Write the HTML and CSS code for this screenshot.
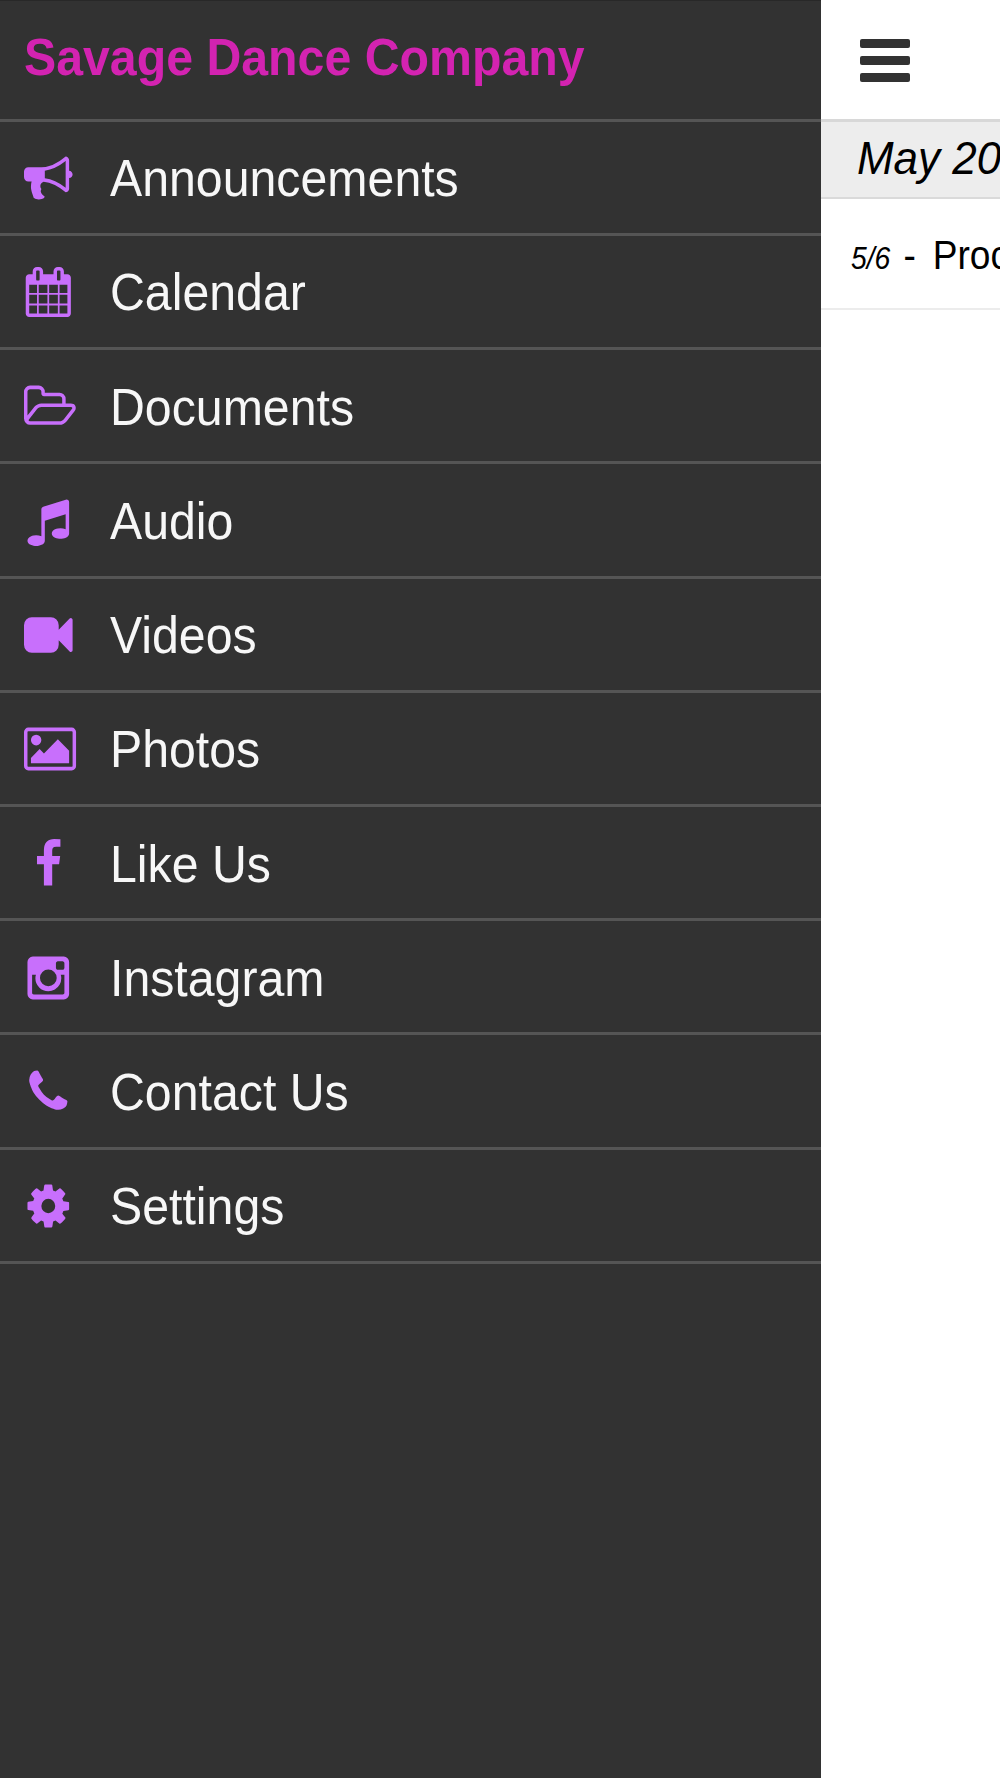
FILE: index.html
```html
<!DOCTYPE html>
<html lang="en">
<head>
<meta charset="utf-8">
<title>Savage Dance Company</title>
<link rel="stylesheet" href="styles.css">
</head>
<body>
<div class="app">
  <nav class="drawer">
    <h1 class="drawer-title"><span class="label">Savage Dance Company</span></h1>
    <ul class="menu">
      <li class="item"><svg class="icon" viewBox="0 0 1792 1792" preserveAspectRatio="none"><path d="M1664 640q53 0 90.5 37.5t37.5 90.5-37.5 90.5-90.5 37.5v384q0 52-38 90t-90 38q-417-347-812-380-58 19-91 66t-31 100.5 40 92.5q-20 33-23 65.5t6 58 33.5 55 48 50 61.5 50.5q-29 58-111.5 83t-168.5 11.5-132-55.5q-7-23-29.5-87.5t-32-94.5-23-89-15-101 3.5-98.5 22-110.5h-122q-66 0-113-47t-47-113v-192q0-66 47-113t113-47h480q435 0 896-384 52 0 90 38t38 90v384zm-128 604v-954q-394 302-768 343v270q377 42 768 341z"/></svg><span class="label">Announcements</span></li>
      <li class="item"><svg class="icon" viewBox="0 0 1792 1792" preserveAspectRatio="none"><path d="M192 1664h288v-288h-288v288zm352 0h320v-288h-320v288zm-352-352h288v-320h-288v320zm352 0h320v-320h-320v320zm-352-384h288v-288h-288v288zm736 736h320v-288h-320v288zm-384-736h320v-288h-320v288zm768 736h288v-288h-288v288zm-384-352h320v-320h-320v320zm-352-864v-288q0-13-9.500-22.500t-22.500-9.500h-64q-13 0-22.500 9.500t-9.500 22.500v288q0 13 9.500 22.500t22.500 9.500h64q13 0 22.500-9.500t9.500-22.500zm736 864h288v-320h-288v320zm-384-384h320v-288h-320v288zm384 0h288v-288h-288v288zm32-480v-288q0-13-9.500-22.500t-22.500-9.500h-64q-13 0-22.500 9.500t-9.500 22.500v288q0 13 9.500 22.500t22.500 9.500h64q13 0 22.500-9.500t9.500-22.500zm384-64v1280q0 52-38 90t-90 38h-1408q-52 0-90-38t-38-90v-1280q0-52 38-90t90-38h128v-96q0-66 47-113t113-47h64q66 0 113 47t47 113v96h384v-96q0-66 47-113t113-47h64q66 0 113 47t47 113v96h128q52 0 90 38t38 90z"/></svg><span class="label">Calendar</span></li>
      <li class="item"><svg class="icon" viewBox="0 0 1792 1792" preserveAspectRatio="none"><path transform="translate(-64 0)" d="M1845 931q0-35-53-35h-1088q-40 0-85.500 21.500t-71.500 52.500l-294 363q-18 24-18 40 0 35 53 35h1088q40 0 86-22t71-53l294-363q18-22 18-39zm-1141-163h768v-160q0-40-28-68t-68-28h-576q-40 0-68-28t-28-68v-64q0-40-28-68t-68-28h-320q-40 0-68 28t-28 68v853l256-315q44-53 116-87.500t140-34.500zm1269 163q0 62-46 120l-295 363q-43 53-116 87.500t-140 34.500h-1088q-92 0-158-66t-66-158v-960q0-92 66-158t158-66h320q92 0 158 66t66 158v32h544q92 0 158 66t66 158v160h192q54 0 99 24.500t67 70.500q15 32 15 68z"/></svg><span class="label">Documents</span></li>
      <li class="item"><svg class="icon" viewBox="0 0 1792 1792" preserveAspectRatio="none"><path d="M1664 224v1120q0 50-34 89t-86 60.500-103.500 32-96.500 10.500-96.500-10.500-103.500-32-86-60.500-34-89 34-89 86-60.500 103.500-32 96.500-10.500q105 0 192 39v-537l-768 237v709q0 50-34 89t-86 60.500-103.500 32-96.500 10.500-96.500-10.500-103.500-32-86-60.500-34-89 34-89 86-60.500 103.500-32 96.500-10.500q105 0 192 39v-967q0-31 19-56.500t49-35.500l832-256q12-4 28-4 40 0 68 28t28 68z"/></svg><span class="label">Audio</span></li>
      <li class="item"><svg class="icon" viewBox="0 0 1792 1792" preserveAspectRatio="none"><path d="M1792 352v1088q0 42-39 59-13 5-25 5-27 0-45-19l-403-403v166q0 119-84.500 203.500t-203.500 84.500h-704q-119 0-203.500-84.500t-84.500-203.500v-704q0-119 84.500-203.500t203.500-84.500h704q119 0 203.500 84.500t84.500 203.500v165l403-402q18-19 45-19 12 0 25 5 39 17 39 59z"/></svg><span class="label">Videos</span></li>
      <li class="item"><svg class="icon" viewBox="0 0 1792 1792" preserveAspectRatio="none"><path transform="translate(64 0)" d="M576 576q0 80-56 136t-136 56-136-56-56-136 56-136 136-56 136 56 56 136zm1024 384v448h-1408v-192l320-320 160 160 512-512zm96-704h-1600q-13 0-22.500 9.500t-9.500 22.500v1216q0 13 9.500 22.500t22.500 9.500h1600q13 0 22.500-9.500t9.500-22.500v-1216q0-13-9.500-22.500t-22.500-9.500zm160 32v1216q0 66-47 113t-113 47h-1600q-66 0-113-47t-47-113v-1216q0-66 47-113t113-47h1600q66 0 113 47t47 113z"/></svg><span class="label">Photos</span></li>
      <li class="item"><svg class="icon" viewBox="0 0 1792 1792" preserveAspectRatio="none"><path d="M1343 12v264h-157q-86 0-116 36t-30 108v189h293l-39 296h-254v759h-306v-759h-255v-296h255v-218q0-186 104-288.500t277-102.500q147 0 228 12z"/></svg><span class="label">Like Us</span></li>
      <li class="item"><svg class="icon" viewBox="0 0 1792 1792" preserveAspectRatio="none"><path d="M1490 1426v-648h-135q20 63 20 131 0 126-64 232.500t-174 168.500-240 62q-197 0-337-135.500t-140-327.500q0-68 20-131h-141v648q0 26 17.500 43.500t43.500 17.500h1069q25 0 43-17.500t18-43.500zm-284-533q0-124-90.500-211.500t-218.500-87.500q-127 0-217.500 87.500t-90.500 211.500 90.500 211.500 217.500 87.500q128 0 218.500-87.500t90.500-211.500zm284-360v-165q0-28-20-48.500t-49-20.500h-174q-29 0-49 20.500t-20 48.500v165q0 29 20 49t49 20h174q29 0 49-20t20-49zm174-208v1142q0 81-58 139t-139 58h-1142q-81 0-139-58t-58-139v-1142q0-81 58-139t139-58h1142q81 0 139 58t58 139z"/></svg><span class="label">Instagram</span></li>
      <li class="item"><svg class="icon" viewBox="0 0 1792 1792" preserveAspectRatio="none"><path d="M1600 1240q0 27-10 70.500t-21 68.500q-21 50-122 106-94 51-186 51-27 0-53-3.500t-57.500-12.500-47-14.500-55.500-20.500-49-18q-98-35-175-83-127-79-264-216t-216-264q-48-77-83-175-3-9-18-49t-20.500-55.500-14.500-47-12.500-57.500-3.500-53q0-92 51-186 56-101 106-122 25-11 68.500-21t70.500-10q14 0 21 3 18 6 53 76 11 19 30 54t35 63.500 31 53.500q3 4 17.500 25t21.500 35.500 7 28.500q0 20-28.500 50t-62 55-62 53-28.500 46q0 9 5 22.500t8.500 20.500 14 24 11.500 19q76 137 174 235t235 174q2 1 19 11.500t24 14 20.500 8.500 22.500 5q18 0 46-28.500t53-62 55-62 50-28.500q14 0 28.500 7t35.500 21.500 25 17.500q25 15 53.500 31t63.500 35 54 30q70 35 76 53 3 7 3 21z"/></svg><span class="label">Contact Us</span></li>
      <li class="item"><svg class="icon" viewBox="0 0 1792 1792" preserveAspectRatio="none"><path d="M1152 896q0-106-75-181t-181-75-181 75-75 181 75 181 181 75 181-75 75-181zm512-109v222q0 12-8 23t-20 13l-185 28q-19 54-39 91 35 50 107 138 10 12 10 25t-9 23q-27 37-99 108t-94 71q-12 0-26-9l-138-108q-44 23-91 38-16 136-29 186-7 28-36 28h-222q-14 0-24.500-8.500t-11.500-21.500l-28-184q-49-16-90-37l-141 107q-10 9-25 9-14 0-25-11-126-114-165-168-7-10-7-23 0-12 8-23 15-21 51-66.500t54-70.500q-27-50-41-99l-183-27q-13-2-21-12.500t-8-23.500v-222q0-12 8-23t19-13l186-28q14-46 39-92-40-57-107-138-10-12-10-24 0-10 9-23 26-36 98.500-107.500t94.500-71.500q13 0 26 10l138 107q44-23 91-38 16-136 29-186 7-28 36-28h222q14 0 24.500 8.500t11.500 21.500l28 184q49 16 90 37l142-107q9-9 24-9 13 0 25 10 129 119 165 170 7 8 7 22 0 12-8 23-15 21-51 66.500t-54 70.500q26 50 41 98l183 28q13 2 21 12.500t8 23.500z"/></svg><span class="label">Settings</span></li>
    </ul>
  </nav>
  <main class="page">
    <header class="topbar">
      <svg class="bars" width="50" height="43" viewBox="0 0 50 43"><rect y="0" width="50" height="9" rx="2"/><rect y="17" width="50" height="9" rx="2"/><rect y="34" width="50" height="9" rx="2"/></svg>
    </header>
    <h2 class="month"><span class="label">May 20</span></h2>
    <div class="event"><span class="label"><i class="date">5/6</i> <span class="dash">-</span> Proc</span></div>
  </main>
</div>
</body>
</html>
```
FILE: styles.css
```css
* {
  box-sizing: border-box;
}

body {
  margin: 0;
  background: #fff;
  font-family: "Liberation Sans", Arial, Helvetica, sans-serif;
}

.app {
  display: flex;
  width: 1000px;
  height: 1778px;
  overflow: hidden;
}

/* Slightly condensed lettering */
.label {
  display: block;
  white-space: nowrap;
  transform: scaleX(0.928);
  transform-origin: 0 50%;
}

.drawer {
  flex: 0 0 821px;
  background: #323232;
  border-top: 1px solid #282828;
}

.drawer-title {
  height: 120.6px;
  margin: 0;
  padding: 26px 0 0 24px;
  border-bottom: 3px solid #555;
  color: #d323b1;
  font-size: 52px;
  line-height: 60px;
  font-weight: bold;
}

.menu {
  margin: 0;
  padding: 0;
  list-style: none;
}

.item {
  display: flex;
  align-items: center;
  height: 114.24px;
  padding: 2px 0 0 24.3px;
  border-bottom: 3px solid #555;
  color: #f7f7f7;
  font-size: 52px;
  line-height: 60px;
}

.icon {
  flex: none;
  width: 48.6px;
  height: 50px;
  margin-right: 37px;
  overflow: visible;
  fill: #c86ffc;
}

.page {
  flex: 1;
  min-width: 0;
  overflow: hidden;
  color: #000;
}

.topbar {
  height: 121.6px;
  padding: 39px 0 0 39px;
  border-bottom: 3px solid #d8d8d8;
}

.bars {
  display: block;
  fill: #323232;
}

.month {
  height: 77px;
  margin: 0;
  padding: 9px 0 0 36px;
  background: #ededed;
  border-bottom: 2px solid #dadada;
  font-size: 46px;
  line-height: 54px;
  font-weight: normal;
  font-style: italic;
}

.month .label {
  transform: scaleX(0.955);
}

.event {
  height: 111px;
  padding: 33px 0 0 30px;
  border-bottom: 2px solid #ececec;
  font-size: 40px;
  line-height: 46px;
}

.date {
  font-size: 30.5px;
  margin-right: 3px;
}

.dash {
  margin-right: 7px;
}
```
